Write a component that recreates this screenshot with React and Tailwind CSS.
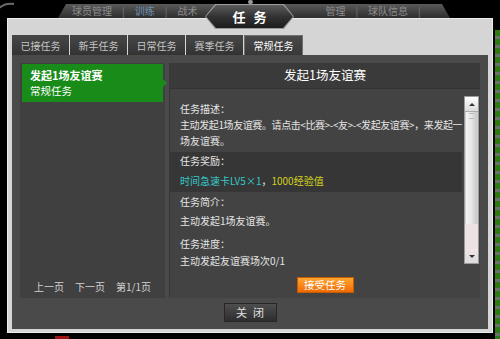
import React from 'react'

const font = { fontFamily: '"Noto Sans CJK SC", "Liberation Sans", sans-serif' }

const tabs = ['已接任务', '新手任务', '日常任务', '赛季任务', '常规任务']

function NavBar() {
    return (
        <div className="absolute left-[58px] top-[4px] h-[14px] w-[392px] bg-gradient-to-b from-[#5a5a5a] to-[#2e2e2e] [clip-path:polygon(8px_0,384px_0,392px_100%,0_100%)] flex items-center pl-[14px] gap-[10px] text-[10px] leading-none text-[#8c8c8c]">
            <span>球员管理</span>
            <span className="text-[#777]">|</span>
            <span className="text-[#6f8fb0]">训练</span>
            <span className="text-[#777]">|</span>
            <span>战术</span>
            <span className="ml-[118px]">管理</span>
            <span className="text-[#777]">|</span>
            <span>球队信息</span>
            <span className="text-[#777]">|</span>
        </div>
    )
}

function ScrollBar() {
    return (
        <div className="mt-[7px] h-[168px] w-[15px] shrink-0 border border-[#9a9a9a] bg-[#d2d2d2] flex flex-col">
            <div className="h-[15px] bg-gradient-to-b from-white to-[#dcdcdc] border-b border-[#aaa] flex items-center justify-center">
                <div className="w-0 h-0 border-l-[3px] border-r-[3px] border-b-[3px] border-l-transparent border-r-transparent border-b-[#333]" />
            </div>
            <div className="h-[112px] mx-px bg-gradient-to-r from-[#f4f4f4] via-[#e6e6e6] to-[#c8c8c8] flex justify-center pt-px">
                <div className="w-[5px] h-[6px] border-y border-[#bbb]" />
            </div>
            <div className="flex-1 bg-[#ece2e2]" />
            <div className="h-[14px] bg-gradient-to-b from-[#f0e6e6] to-[#dcdcdc] flex items-center justify-center">
                <div className="w-0 h-0 border-l-[3px] border-r-[3px] border-t-[3px] border-l-transparent border-r-transparent border-t-[#333]" />
            </div>
        </div>
    )
}

export default function App() {
    return (
        <div className="relative w-[500px] h-[339px] overflow-hidden bg-black pt-[18px] pl-[7px]" style={font}>
            {/* game screen behind the window */}
            <svg className="absolute left-0 top-0" width="24" height="30" viewBox="0 0 24 30">
                <path d="M-6 28 A 18 18 0 0 1 14 4" fill="none" stroke="#6a6a6a" strokeWidth="2" />
            </svg>
            <NavBar />
            <div className="absolute right-0 top-[30px] h-[309px] w-[5px] bg-[repeating-linear-gradient(to_bottom,#2c7a12_0px,#2c7a12_6px,#6e6e6e_6px,#6e6e6e_9px)]" />
            <div className="absolute left-[55px] bottom-0 h-[3px] w-[14px] bg-[#9c1414]" />
            <div className="absolute left-[248px] top-0 h-[4px] w-[5px] rounded-full bg-[#9a9a9a]" />

            {/* window */}
            <div className="relative w-[486px] h-[315px] bg-[#d5d5d5] border border-[#ececec] pt-[16px] px-[4px] pb-[3px] flex flex-col">
                <div className="flex gap-px h-[20px]">
                    {tabs.map((t, i) => (
                        <div
                            key={t}
                            className={i === 4
                                ? 'w-[59px] shrink-0 flex items-center justify-center bg-gradient-to-b from-[#4a4a4a] to-[#383838] border border-b-0 border-[#707070] text-[10px] text-white'
                                : 'w-[57px] shrink-0 flex items-center justify-center bg-gradient-to-b from-[#474747] to-[#333] text-[10px] text-[#c4c4c4]'}
                        >
                            {t}
                        </div>
                    ))}
                </div>

                <div className="flex-1 bg-[#4a4a4a] pt-[8px] px-[8px] flex flex-col">
                    <div className="flex gap-[4px] h-[235px]">
                        {/* list */}
                        <div className="w-[145px] shrink-0 bg-[#404041] flex flex-col">
                            <div className="relative mx-[2px] mt-px h-[38px] bg-[#188b18] pl-[8px] pt-[3px] text-white leading-[16px]">
                                <div className="text-[11px] font-bold">发起1场友谊赛</div>
                                <div className="text-[10.5px]">常规任务</div>
                                <div className="absolute -right-[4px] top-[15px] w-0 h-0 border-t-[4px] border-b-[4px] border-l-[4px] border-t-transparent border-b-transparent border-l-[#188b18]" />
                            </div>
                            <div className="flex-1" />
                            <div className="flex justify-center gap-[11px] pb-[3px] text-[10px] leading-[16px] text-[#d2d2d2] whitespace-nowrap">
                                <span>上一页</span>
                                <span>下一页</span>
                                <span>第1/1页</span>
                            </div>
                        </div>

                        {/* detail */}
                        <div className="flex-1 min-w-0 bg-[#434343] border-l border-[#383838] flex flex-col">
                            <div className="h-[26px] bg-[#3a3a3a] border-b border-[#333] flex items-center justify-center text-[12.5px] text-white">
                                发起1场友谊赛
                            </div>
                            <div className="h-[181px] flex gap-[2px] pr-px">
                                <div className="flex-1 min-w-0 overflow-hidden pt-[12px] text-[10px] leading-[16px] text-[#e6e6e6]">
                                    <div className="px-[10px]">
                                        <div>任务描述：</div>
                                        <div className="whitespace-nowrap tracking-[-0.4px]">主动发起1场友谊赛。请点击&lt;比赛&gt;-&lt;友&gt;-&lt;发起友谊赛&gt;，来发起一</div>
                                        <div>场友谊赛。</div>
                                    </div>
                                    <div className="mt-[3px] bg-[#363636] px-[10px] pt-px pb-[3px]">
                                        <div>任务奖励：</div>
                                        <div className="mt-[4px]">
                                            <span className="text-[#35c8c8]">时间急速卡LV5×1</span>
                                            <span>，</span>
                                            <span className="text-[#d2d21e]">1000经验值</span>
                                        </div>
                                    </div>
                                    <div className="px-[10px]">
                                        <div className="mt-[2px]">任务简介：</div>
                                        <div className="mt-[3px]">主动发起1场友谊赛。</div>
                                        <div className="mt-[7px]">任务进度：</div>
                                        <div className="mt-px">主动发起友谊赛场次0/1</div>
                                    </div>
                                </div>
                                <ScrollBar />
                            </div>
                            <div className="mt-[7px] flex justify-center">
                                <button className="w-[57px] h-[16px] bg-gradient-to-b from-[#ffa530] to-[#f06a00] border border-[#c85a00] text-[10.5px] leading-none text-white">
                                    接受任务
                                </button>
                            </div>
                        </div>
                    </div>

                    <div className="mt-[5px] flex justify-center">
                        <button className="w-[53px] h-[19px] bg-gradient-to-b from-[#4e4e4e] to-[#2e2e2e] border border-[#262626] text-[11px] leading-none text-[#e0e0e0] tracking-[6px] pl-[6px]">
                            关闭
                        </button>
                    </div>
                </div>
            </div>

            {/* title tab */}
            <div className="absolute left-[205px] top-[4px] w-[89px] h-[25px] bg-[#9a9a9a] [clip-path:polygon(10px_0,79px_0,89px_50%,79px_100%,10px_100%,0_50%)] p-px">
                <div className="w-full h-full bg-gradient-to-b from-[#5c5c5c] via-[#333] to-[#1c1c1c] [clip-path:polygon(10px_0,77px_0,87px_50%,77px_100%,10px_100%,0_50%)] flex items-center justify-center text-[13px] font-bold text-white tracking-[8px] pl-[8px]">
                    任务
                </div>
            </div>
        </div>
    )
}
